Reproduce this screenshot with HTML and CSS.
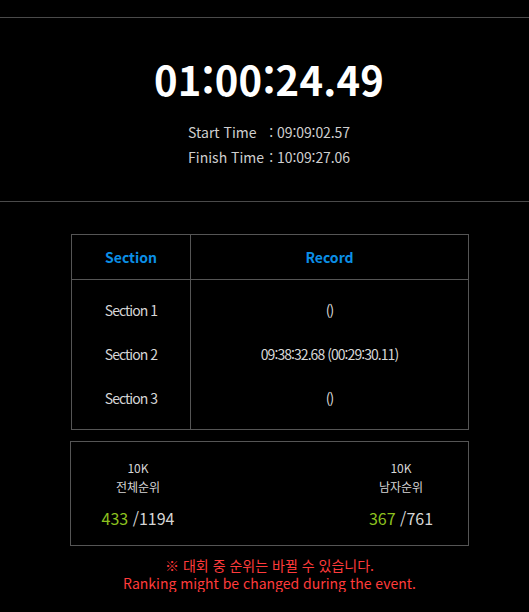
FILE: index.html
```html
<!DOCTYPE html>
<html lang="ko">
<head>
<meta charset="utf-8">
<title>Record</title>
<link rel="stylesheet" href="styles.css">
</head>
<body>
<div class="page">
  <section class="summary">
    <div class="total-time">01:00:24.49</div>
    <div class="times">
      <div class="time-row"><span class="label">Start Time</span><span class="sep">:</span><span class="value">09:09:02.57</span></div>
      <div class="time-row"><span class="label">Finish Time</span><span class="sep">:</span><span class="value">10:09:27.06</span></div>
    </div>
  </section>

  <div class="records">
    <div class="head section-col">Section</div>
    <div class="head record-col">Record</div>
    <div class="body section-col">
      <div class="line">Section 1</div>
      <div class="line">Section 2</div>
      <div class="line">Section 3</div>
    </div>
    <div class="body record-col">
      <div class="line">()</div>
      <div class="line">09:38:32.68 (00:29:30.11)</div>
      <div class="line">()</div>
    </div>
  </div>

  <div class="ranks">
    <div class="rank">
      <div class="rank-title">10K<br>전체순위</div>
      <div class="rank-num"><span class="pos">433</span> /1194</div>
    </div>
    <div class="rank">
      <div class="rank-title">10K<br>남자순위</div>
      <div class="rank-num"><span class="pos">367</span> /761</div>
    </div>
  </div>

  <p class="notice">※ 대회 중 순위는 바뀔 수 있습니다.<br>Ranking might be changed during the event.</p>
</div>
</body>
</html>
```
FILE: styles.css
```css
html, body {
  margin: 0;
  padding: 0;
  background: #000;
}

body {
  font-family: "Noto Sans CJK KR", "Noto Sans", sans-serif;
  color: #d0d0d0;
}

.page {
  padding-top: 17px;
}

.summary {
  border-top: 1px solid #4a4a4a;
  border-bottom: 1px solid #4a4a4a;
  height: 185px;
  box-sizing: border-box;
  padding: 37px 0 0 9px;
  text-align: center;
}

.total-time {
  font-size: 40px;
  font-weight: 700;
  color: #fff;
  line-height: 48px;
  letter-spacing: 0.2px;
}

.times {
  margin-top: 17px;
  display: inline-block;
  text-align: left;
  font-size: 14px;
  line-height: 25px;
  color: #cfcfcf;
}

.time-row {
  display: flex;
}

.label {
  width: 77px;
}

.sep {
  width: 12px;
  text-align: center;
}

.value {
  letter-spacing: -0.1px;
}

.records {
  margin: 32px 60px 0 71px;
  display: grid;
  grid-template-columns: 119px 1fr;
  border: 1px solid #555;
  width: 398px;
  box-sizing: border-box;
}

.head {
  height: 44px;
  display: flex;
  align-items: center;
  justify-content: center;
  font-size: 14px;
  font-weight: 700;
  color: #0b8fe6;
  border-bottom: 1px solid #555;
}

.section-col {
  border-right: 1px solid #555;
}

.body {
  padding: 8px 0 9px;
  font-size: 14px;
  letter-spacing: -0.95px;
  color: #d6d6d6;
}

.line {
  height: 44px;
  display: flex;
  align-items: center;
  justify-content: center;
}

.ranks {
  margin: 11px 0 0 70px;
  width: 399px;
  height: 105px;
  box-sizing: border-box;
  border: 1px solid #555;
  display: flex;
  justify-content: space-between;
  padding: 16px 20px 0;
}

.rank {
  width: 94px;
  text-align: center;
}

.rank-title {
  font-size: 12px;
  line-height: 19px;
  color: #d6d6d6;
}

.rank-num {
  margin-top: 11px;
  font-size: 16px;
  line-height: 22px;
  color: #d6d6d6;
}

.pos {
  color: #8dc21f;
}

.notice {
  margin: 10px 0 0 10px;
  text-align: center;
  font-size: 14px;
  line-height: 18px;
  color: #ff3b3b;
}
```
